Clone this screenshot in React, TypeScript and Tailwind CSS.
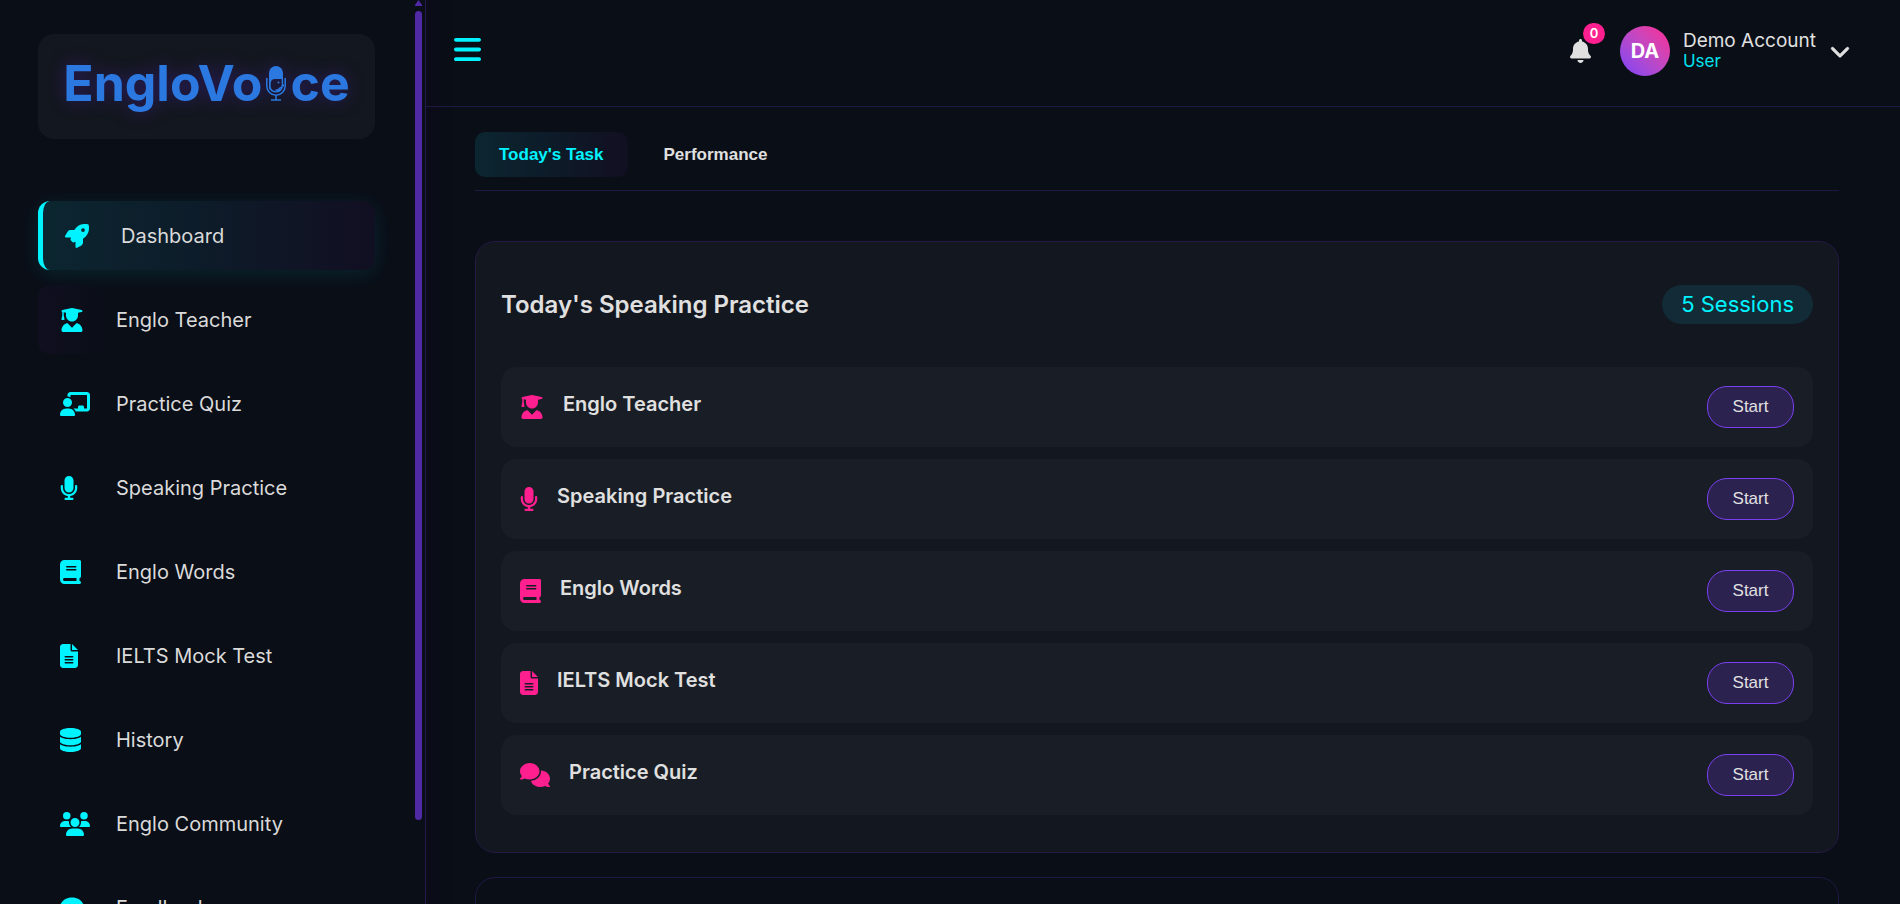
import type { IconType } from "react-icons";
import {
  FaBars,
  FaBell,
  FaBook,
  FaChalkboardUser,
  FaChevronDown,
  FaComment,
  FaComments,
  FaDatabase,
  FaFileLines,
  FaMicrophone,
  FaRocket,
  FaUserGraduate,
  FaUsers,
} from "react-icons/fa6";

type Item = { label: string; icon: IconType; size: string };

const navItems: Item[] = [
  { label: "Dashboard", icon: FaRocket, size: "w-6" },
  { label: "Englo Teacher", icon: FaUserGraduate, size: "w-6" },
  { label: "Practice Quiz", icon: FaChalkboardUser, size: "w-[30px]" },
  { label: "Speaking Practice", icon: FaMicrophone, size: "w-[18px]" },
  { label: "Englo Words", icon: FaBook, size: "w-[21px]" },
  { label: "IELTS Mock Test", icon: FaFileLines, size: "w-[18px]" },
  { label: "History", icon: FaDatabase, size: "w-[21px]" },
  { label: "Englo Community", icon: FaUsers, size: "w-[30px]" },
  { label: "Feedback", icon: FaComment, size: "w-6" },
];

const sessions: Item[] = [
  { label: "Englo Teacher", icon: FaUserGraduate, size: "w-6" },
  { label: "Speaking Practice", icon: FaMicrophone, size: "w-[18px]" },
  { label: "Englo Words", icon: FaBook, size: "w-[21px]" },
  { label: "IELTS Mock Test", icon: FaFileLines, size: "w-[18px]" },
  { label: "Practice Quiz", icon: FaComments, size: "w-[30px]" },
];

function Logo() {
  return (
    <a
      href="#"
      aria-label="EngloVoice"
      className="flex h-[105px] shrink-0 items-center justify-center rounded-2xl bg-[#13171f] pb-2 text-[#2b78e0]"
    >
      <span className="flex items-baseline text-[50px] leading-none font-bold drop-shadow-[0_0_8px_rgba(60,30,140,0.6)]">
        EngloVo
        <svg viewBox="0 0 20 35" className="mx-1 h-[35px] w-5" fill="none" stroke="currentColor" aria-hidden="true">
          <path
            fill="currentColor"
            stroke="none"
            d="M10 0a7 7 0 0 0-7 7v15c0 .8.6 1.300 1.400 1.300C5 21 4.500 19 4.700 17c.3-2.500 1.700-4 4.300-4h8V7a7 7 0 0 0-7-7Z"
          />
          <path strokeWidth="1.500" d="M.8 12v8a9.200 9.200 0 0 0 18.400 0v-8" />
          <path
            strokeWidth="1.500"
            d="M3.700 21c1 3.300 3.300 4.800 6.300 4.800s5-1.600 5.700-4M16.400 13v4.500l1 2.200h-1.400v2h-2.400M9.500 24h2c1.500-.2 2-1.200 2-2.200M10 29.500v4M5 34h10"
          />
          <circle cx="12.500" cy="16.500" r="1" fill="currentColor" stroke="none" />
        </svg>
        ce
      </span>
    </a>
  );
}

function Sidebar() {
  return (
    <aside className="flex w-[426px] shrink-0 justify-between overflow-hidden border-r border-[#231a4a] bg-[#0a0e17] pr-[3px] pl-[38px] shadow-[4px_0_16px_rgba(16,8,32,0.5)]">
      <div className="flex w-[337px] flex-col gap-[62px] pt-[34px]">
        <Logo />
        <nav className="flex flex-col gap-[15px]">
          {navItems.map(({ label, icon: Icon, size }, i) => (
            <a
              key={label}
              href="#"
              className={`flex h-[69px] shrink-0 items-center gap-5 rounded-xl px-[22px] text-xl text-[#dadada] ${
                i === 0
                  ? "border-l-[5px] border-[#00f3ff] bg-linear-to-r from-[#0b2630] via-[#0d1b29] to-[#110f22] shadow-[0_4px_20px_rgba(0,243,255,0.1)]"
                  : i === 1
                    ? "bg-linear-to-r from-[#100f20] to-transparent to-20%"
                    : ""
              }`}
            >
              <span className="w-9 text-[#00f3ff]">
                <Icon className={`h-6 ${size}`} />
              </span>
              {label}
            </a>
          ))}
        </nav>
      </div>

      <div className="flex h-full w-[7px] flex-col gap-[5px]" aria-hidden="true">
        <svg viewBox="0 0 7 6" className="h-[6px] w-[7px] shrink-0 fill-[#5029a5]">
          <path d="M3.500 0 7 5v1H0V5Z" />
        </svg>
        <div className="h-[calc(100%-95px)] rounded-full bg-[#5029a5]" />
      </div>
    </aside>
  );
}

function Header() {
  return (
    <header className="flex items-center justify-between border-b border-[#1f1844] pt-[26px] pr-[50px] pb-[30px] pl-7">
      <button type="button" aria-label="Toggle menu" className="pb-1 text-[#00f3ff]">
        <FaBars className="h-[31px] w-[27px]" />
      </button>

      <div className="flex items-center">
        <button type="button" aria-label="Notifications" className="relative mr-[29px] text-[#e0e0e0]">
          <FaBell className="h-6 w-[21px]" />
          <span className="absolute -top-4 -right-[14px] flex h-[21px] w-[22px] items-center justify-center rounded-full bg-[#ff1f8f] text-[13px] font-semibold text-white">
            0
          </span>
        </button>
        <button type="button" className="flex items-center text-left">
          <span className="flex size-[50px] items-center justify-center rounded-full bg-linear-to-tr from-[#7b3ff9] to-[#ff1f8f] text-xl font-bold text-white">
            DA
          </span>
          <span className="mr-[14px] ml-[13px] flex flex-col leading-[21px]">
            <span className="text-[19px] text-[#e0e0e0]">Demo Account</span>
            <span className="text-[17px] text-[#00e5f0]">User</span>
          </span>
          <FaChevronDown className="size-5 stroke-current stroke-[20] text-[#e0e0e0]" />
        </button>
      </div>
    </header>
  );
}

function Tabs() {
  return (
    <div className="flex gap-3 border-b border-[#1f1844] pb-[13px] font-['Liberation_Sans',Arial,sans-serif] text-[17px] font-bold">
      <button
        type="button"
        className="h-[45px] rounded-[10px] bg-linear-to-r from-[#0b2630] via-[#0d1b29] to-[#110f22] px-6 text-[#00f3ff]"
      >
        Today's Task
      </button>
      <button type="button" className="h-[45px] rounded-[10px] px-6 text-[#e0e0e0]">
        Performance
      </button>
    </div>
  );
}

function SessionsCard() {
  return (
    <section className="rounded-[20px] border border-[#231a47] bg-[#13171f] px-[25px] pt-[43px] pb-[37px]">
      <div className="mb-[43px] flex items-center justify-between">
        <h2 className="text-2xl font-semibold text-[#e0e0e0]">Today's Speaking Practice</h2>
        <span className="flex h-[39px] items-center rounded-full bg-[#122b36] px-[19px] text-[22px] text-[#00f3ff]">
          5 Sessions
        </span>
      </div>

      <ul className="flex flex-col gap-3">
        {sessions.map(({ label, icon: Icon, size }) => (
          <li key={label} className="flex items-center rounded-[15px] bg-[#191d25] p-[19px]">
            <Icon className={`mr-[19px] h-6 text-[#ff1f8f] ${size}`} />
            <h3 className="pb-[6px] text-xl font-semibold text-[#e0e0e0]">{label}</h3>
            <button
              type="button"
              className="ml-auto h-[42px] w-[87px] rounded-[20px] border border-[#7b3ff2] bg-[#2c2250] font-['Liberation_Sans',Arial,sans-serif] text-[17px] text-[#e0e0e0]"
            >
              Start
            </button>
          </li>
        ))}
      </ul>
    </section>
  );
}

export default function App() {
  return (
    <div className="flex h-screen overflow-hidden bg-[#0a0e17] font-[Inter,sans-serif]">
      <Sidebar />
      <div className="min-w-0 flex-1 overflow-hidden">
        <Header />
        <main className="pt-[25px] pr-[61px] pl-[49px]">
          <Tabs />
          <div className="mt-[50px] flex flex-col gap-6">
            <SessionsCard />
            <section className="min-h-40 rounded-[20px] border border-[#1f1844]" />
          </div>
        </main>
      </div>
    </div>
  );
}
